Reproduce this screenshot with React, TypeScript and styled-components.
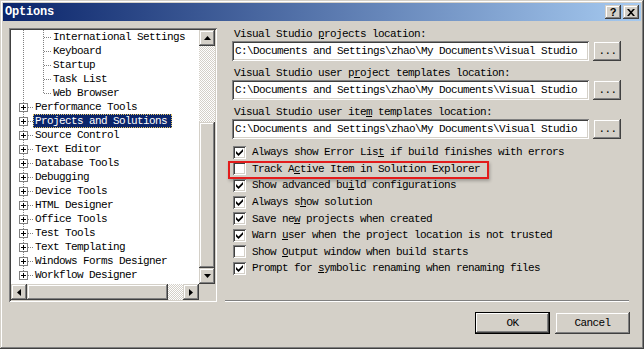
import styled, { createGlobalStyle } from "styled-components";

const GlobalStyle = createGlobalStyle`
  html, body {
    margin: 0;
    padding: 0;
    background: #d4d0c8;
  }
`;

const raised = `
  box-shadow: inset -1px -1px #404040, inset 1px 1px #d4d0c8,
    inset -2px -2px #808080, inset 2px 2px #fff;
`;

const sunken = `
  box-shadow: inset 1px 1px #808080, inset -1px -1px #fff,
    inset 2px 2px #404040, inset -2px -2px #d4d0c8;
`;

const childItems = ["International Settings", "Keyboard", "Startup", "Task List", "Web Browser"];

const topItems = [
  "Performance Tools",
  "Projects and Solutions",
  "Source Control",
  "Text Editor",
  "Database Tools",
  "Debugging",
  "Device Tools",
  "HTML Designer",
  "Office Tools",
  "Test Tools",
  "Text Templating",
  "Windows Forms Designer",
  "Workflow Designer",
];

const SELECTED = "Projects and Solutions";

const locations = [
  { pre: "Visual Studio ", key: "p", post: "rojects location:" },
  { pre: "Visual Studio user p", key: "r", post: "oject templates location:" },
  { pre: "Visual Studio user ite", key: "m", post: " templates location:" },
];

const PATH = "C:\\Documents and Settings\\zhao\\My Documents\\Visual Studio";

const options = [
  { pre: "Always show Error Lis", key: "t", post: " if build finishes with errors", on: true },
  { pre: "Track A", key: "c", post: "tive Item in Solution Explorer", on: false, marked: true },
  { pre: "Show advanced bu", key: "i", post: "ld configurations", on: true },
  { pre: "Always s", key: "h", post: "ow solution", on: true },
  { pre: "Save ne", key: "w", post: " projects when created", on: true },
  { pre: "Warn ", key: "u", post: "ser when the project location is not trusted", on: true },
  { pre: "Show ", key: "O", post: "utput window when build starts", on: false },
  { pre: "Prompt for ", key: "s", post: "ymbolic renaming when renaming files", on: true },
];

function ChildLines({ last }: { last: boolean }) {
  return (
    <svg width="40" height="14" shapeRendering="crispEdges">
      <line x1="12.5" y1="0" x2="12.5" y2="14" stroke="#808080" strokeDasharray="1 1" />
      <line x1="32.5" y1="0" x2="32.5" y2={last ? 8 : 14} stroke="#808080" strokeDasharray="1 1" />
      <line x1="33" y1="7.5" x2="40" y2="7.5" stroke="#808080" strokeDasharray="1 1" />
    </svg>
  );
}

function PlusLines({ last }: { last: boolean }) {
  return (
    <svg width="22" height="14" shapeRendering="crispEdges">
      <line x1="12.5" y1="0" x2="12.5" y2={last ? 7 : 14} stroke="#808080" strokeDasharray="1 1" />
      <line x1="17" y1="7.5" x2="22" y2="7.5" stroke="#808080" strokeDasharray="1 1" />
      <rect x="8.5" y="3.5" width="8" height="8" fill="#fff" stroke="#808080" />
      <line x1="10" y1="7.5" x2="15" y2="7.5" stroke="#000" />
      <line x1="12.5" y1="5" x2="12.5" y2="10" stroke="#000" />
    </svg>
  );
}

function Arrow({ dir }: { dir: "up" | "down" | "left" | "right" }) {
  const pts = {
    up: "3.5,0 7,4 0,4",
    down: "0,0 7,0 3.5,4",
    left: "4,0 4,7 0,3.5",
    right: "0,0 4,3.5 0,7",
  }[dir];
  const vertical = dir === "up" || dir === "down";
  return (
    <svg width={vertical ? 7 : 4} height={vertical ? 4 : 7}>
      <polygon points={pts} fill="#000" />
    </svg>
  );
}

function Check() {
  return (
    <svg width="7" height="7" viewBox="0 0 7 7">
      <path d="M0 2 L2.5 4.5 L7 0 L7 2.5 L2.5 7 L0 4.5 Z" fill="#000" />
    </svg>
  );
}

export default function App() {
  return (
    <>
      <GlobalStyle />
      <Window>
        <TitleBar>
          <Title>Options</Title>
          <CaptionButton>
            <HelpGlyph>?</HelpGlyph>
          </CaptionButton>
          <CaptionButton>
            <svg width="8" height="7" viewBox="0 0 8 7">
              <path d="M0 0 L2 0 L4 2.2 L6 0 L8 0 L5 3.5 L8 7 L6 7 L4 4.8 L2 7 L0 7 L3 3.5 Z" fill="#000" />
            </svg>
          </CaptionButton>
        </TitleBar>

        <Body>
          <Main>
            <TreePanel>
              <TreeContent>
                {childItems.map((item, i) => (
                  <TreeRow key={item}>
                    <ChildLines last={i === childItems.length - 1} />
                    <TreeLabel>{item}</TreeLabel>
                  </TreeRow>
                ))}
                {topItems.map((item, i) => (
                  <TreeRow key={item}>
                    <PlusLines last={i === topItems.length - 1} />
                    <TreeLabel $selected={item === SELECTED}>{item}</TreeLabel>
                  </TreeRow>
                ))}
              </TreeContent>

              <VScroll>
                <ScrollButton>
                  <Arrow dir="up" />
                </ScrollButton>
                <ScrollTrack />
                <VThumb />
                <ScrollButton>
                  <Arrow dir="down" />
                </ScrollButton>
              </VScroll>

              <HScroll>
                <ScrollButton>
                  <Arrow dir="left" />
                </ScrollButton>
                <HThumb />
                <ScrollTrack />
                <ScrollButton>
                  <Arrow dir="right" />
                </ScrollButton>
              </HScroll>

              <Corner />
            </TreePanel>

            <RightColumn>
              <Settings>
                {locations.map((loc) => (
                  <LocationGroup key={loc.post}>
                    <FieldLabel>
                      {loc.pre}
                      <Key>{loc.key}</Key>
                      {loc.post}
                    </FieldLabel>
                    <FieldRow>
                      <TextBox>{PATH}</TextBox>
                      <BrowseButton>...</BrowseButton>
                    </FieldRow>
                  </LocationGroup>
                ))}

                <CheckList>
                  {options.map((opt) => (
                    <CheckRow key={opt.post}>
                      <CheckBox>{opt.on && <Check />}</CheckBox>
                      <span>
                        {opt.pre}
                        <Key>{opt.key}</Key>
                        {opt.post}
                      </span>
                      {opt.marked && <Marker />}
                    </CheckRow>
                  ))}
                </CheckList>
              </Settings>
              <Separator />
            </RightColumn>
          </Main>

          <Footer>
            <DialogButton $default>OK</DialogButton>
            <DialogButton>Cancel</DialogButton>
          </Footer>
        </Body>
      </Window>
    </>
  );
}

/**
 * styles
 */
const Window = styled.div`
  width: 644px;
  height: 349px;
  box-sizing: border-box;
  padding: 3px;
  display: flex;
  flex-direction: column;
  background: #d4d0c8;
  ${raised}
  font-family: "Liberation Mono", "Courier New", monospace;
  font-size: 11px;
  letter-spacing: -0.6px;
  color: #000;
`;

const TitleBar = styled.div`
  height: 18px;
  display: flex;
  align-items: center;
  gap: 2px;
  padding: 0 2px;
  background: linear-gradient(to right, #0a246a, #a6caf0);
`;

const Title = styled.span`
  flex: 1;
  color: #fff;
  font-weight: bold;
  font-size: 12px;
  letter-spacing: -0.2px;
`;

const CaptionButton = styled.div`
  width: 16px;
  height: 14px;
  display: flex;
  align-items: center;
  justify-content: center;
  background: #d4d0c8;
  ${raised}
`;

const HelpGlyph = styled.span`
  font-family: "Liberation Sans", Arial, sans-serif;
  font-weight: bold;
  font-size: 11px;
  letter-spacing: 0;
  line-height: 11px;
`;

const Body = styled.div`
  flex: 1;
  display: flex;
  flex-direction: column;
  padding: 7px 11px 0 6px;
`;

const Main = styled.div`
  display: flex;
  gap: 8px;
  height: 274px;
`;

const TreePanel = styled.div`
  width: 208px;
  flex-shrink: 0;
  box-sizing: border-box;
  padding: 2px;
  background: #fff;
  ${sunken}
  display: grid;
  grid-template-columns: 1fr 16px;
  grid-template-rows: 1fr 16px;
`;

const TreeContent = styled.div`
  overflow: hidden;
  background: #fff;
`;

const TreeRow = styled.div`
  height: 14px;
  display: flex;
  align-items: stretch;
  white-space: nowrap;

  svg {
    flex-shrink: 0;
  }
`;

const TreeLabel = styled.span<{ $selected?: boolean }>`
  box-sizing: border-box;
  line-height: 14px;
  padding: 0 5px 0 2px;
  background: ${(p) => (p.$selected ? "#0a246a" : "transparent")};
  color: ${(p) => (p.$selected ? "#fff" : "#000")};
  outline: ${(p) => (p.$selected ? "1px dotted #e8c860" : "none")};
  outline-offset: -1px;
`;

const checker = `
  background-color: #fff;
  background-image: repeating-conic-gradient(#d4d0c8 0 25%, #fff 0 50%);
  background-size: 2px 2px;
`;

const VScroll = styled.div`
  display: flex;
  flex-direction: column;
`;

const HScroll = styled.div`
  display: flex;
`;

const ScrollButton = styled.div`
  width: 16px;
  height: 16px;
  flex-shrink: 0;
  display: flex;
  align-items: center;
  justify-content: center;
  background: #d4d0c8;
  ${raised}
`;

const ScrollTrack = styled.div`
  flex: 1;
  ${checker}
`;

const VThumb = styled.div`
  height: 146px;
  flex-shrink: 0;
  background: #d4d0c8;
  ${raised}
`;

const HThumb = styled.div`
  width: 141px;
  flex-shrink: 0;
  background: #d4d0c8;
  ${raised}
`;

const Corner = styled.div`
  background: #d4d0c8;
`;

const RightColumn = styled.div`
  flex: 1;
  min-width: 0;
  display: flex;
  flex-direction: column;
`;

const Settings = styled.div`
  flex: 1;
  min-width: 0;
  display: flex;
  flex-direction: column;
  gap: 6px;
  padding: 0 9px 0 7px;
`;

const LocationGroup = styled.div`
  display: flex;
  flex-direction: column;
`;

const FieldLabel = styled.div`
  height: 13px;
  line-height: 13px;
  padding-left: 2px;
  white-space: nowrap;
`;

const FieldRow = styled.div`
  height: 20px;
  display: flex;
  gap: 4px;
`;

const TextBox = styled.div`
  flex: 1;
  min-width: 0;
  box-sizing: border-box;
  padding: 0 0 0 3px;
  line-height: 20px;
  background: #fff;
  ${sunken}
  white-space: nowrap;
  overflow: hidden;
`;

const BrowseButton = styled.div`
  width: 28px;
  flex-shrink: 0;
  box-sizing: border-box;
  display: flex;
  align-items: center;
  justify-content: center;
  padding-left: 1px;
  background: #d4d0c8;
  ${raised}
`;

const Key = styled.span`
  text-decoration: underline;
`;

const CheckList = styled.div`
  margin-top: -1px;
  display: flex;
  flex-direction: column;
`;

const CheckRow = styled.div`
  position: relative;
  height: 16.6px;
  display: flex;
  align-items: center;
  white-space: nowrap;
`;

const CheckBox = styled.div`
  width: 13px;
  height: 13px;
  flex-shrink: 0;
  box-sizing: border-box;
  margin: 0 6px 0 1px;
  display: flex;
  align-items: center;
  justify-content: center;
  background: #fff;
  ${sunken}
`;

const Marker = styled.div`
  position: absolute;
  left: -4px;
  top: 0;
  width: 261px;
  height: 18px;
  box-sizing: border-box;
  border: 2px solid #e31c1c;
  box-shadow: 1px 2px 3px rgba(0, 0, 0, 0.25);
`;

const Separator = styled.div`
  height: 0;
  margin-right: 1px;
  border-top: 1px solid #808080;
  border-bottom: 1px solid #fff;
`;

const Footer = styled.div`
  margin-top: 10px;
  display: flex;
  justify-content: flex-end;
  gap: 5px;
`;

const DialogButton = styled.div<{ $default?: boolean }>`
  width: 75px;
  height: 22px;
  box-sizing: border-box;
  display: flex;
  align-items: center;
  justify-content: center;
  background: #d4d0c8;
  ${(p) =>
    p.$default
      ? `
    border: 1px solid #000;
    box-shadow: inset -1px -1px #404040, inset 1px 1px #fff, inset -2px -2px #808080;
  `
      : raised}
`;
